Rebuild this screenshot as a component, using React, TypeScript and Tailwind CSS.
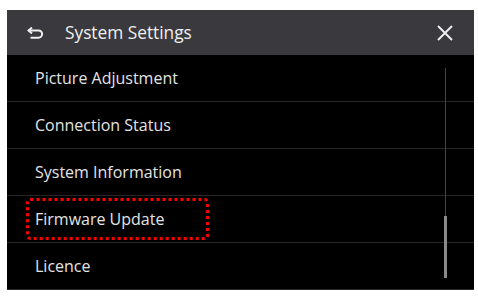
import React from "react";

const items = ["Picture Adjustment", "Connection Status", "System Information", "Firmware Update", "Licence"];

export default function App() {
  return (
    <div className="w-[478px] h-[298px] bg-white pl-[7px] pr-[4px] pt-[10px] pb-[8px]" style={{ fontFamily: '"Open Sans", "Noto Sans", sans-serif' }}>
      <div className="w-full h-full bg-black flex flex-col">
        <div className="h-[45px] bg-[#3a3a3e] flex items-center shrink-0">
          <svg className="ml-[20px] mt-[1px]" width="17" height="15" viewBox="0 0 17 15" fill="none" stroke="#eeeeee" strokeWidth="2">
            <path d="M5 1.5 L1.5 4.5 L5 7.5" strokeLinejoin="miter" />
            <path d="M1.5 4.5 H11.5 A3.6 3.6 0 0 1 11.5 11.7 H3.5" />
          </svg>
          <span className="ml-[21px] text-[17.3px] text-[#f0f0f0] leading-none">System Settings</span>
          <svg className="ml-auto mr-[21px]" width="16" height="16" viewBox="0 0 16 16" stroke="#eeeeee" strokeWidth="2">
            <path d="M1 1 L15 15 M15 1 L1 15" />
          </svg>
        </div>
        <div className="relative flex-1 flex flex-col">
          {items.map((t) => (
            <div key={t} className="relative h-[47px] border-b border-[#262626] flex items-center pl-[28px] shrink-0">
              <span className="text-[16px] text-[#e4e4e4] leading-none">{t}</span>
              {t === "Firmware Update" && (
                <svg className="absolute left-[19px] top-[2px]" width="183" height="42" viewBox="0 0 183 42" fill="none">
                  <rect x="1.5" y="1.5" width="180" height="39" rx="3" stroke="#ff0000" strokeWidth="3" strokeDasharray="3 3" />
                </svg>
              )}
            </div>
          ))}
          <div className="absolute left-[438px] top-[13px] w-px h-[208px] bg-[#444446]" />
          <div className="absolute left-[437px] top-[161px] w-[3px] h-[62px] bg-[#8a8a8c]" />
        </div>
      </div>
    </div>
  );
}
